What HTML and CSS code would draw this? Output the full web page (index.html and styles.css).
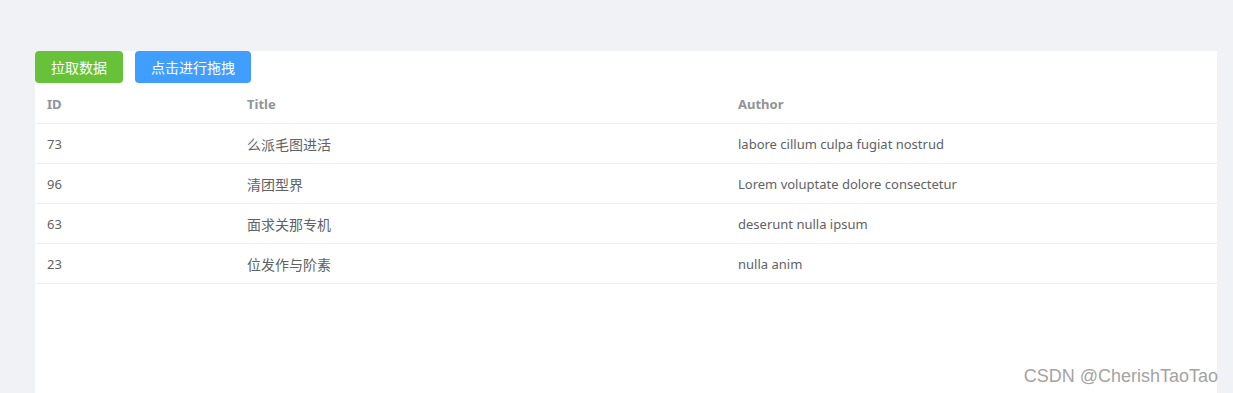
FILE: index.html
```html
<!DOCTYPE html>
<html lang="zh">
<head>
<meta charset="utf-8">
<link rel="stylesheet" href="styles.css">
</head>
<body>
<div class="page">
  <div class="panel">
    <div class="toolbar">
      <button class="btn btn-success">拉取数据</button>
      <button class="btn btn-primary">点击进行拖拽</button>
    </div>
    <div class="table">
      <div class="row head">
        <div class="cell c-id">ID</div>
        <div class="cell c-title">Title</div>
        <div class="cell c-author">Author</div>
      </div>
      <div class="row">
        <div class="cell c-id">73</div>
        <div class="cell c-title zh">么派毛图进活</div>
        <div class="cell c-author">labore cillum culpa fugiat nostrud</div>
      </div>
      <div class="row">
        <div class="cell c-id">96</div>
        <div class="cell c-title zh">清团型界</div>
        <div class="cell c-author">Lorem voluptate dolore consectetur</div>
      </div>
      <div class="row">
        <div class="cell c-id">63</div>
        <div class="cell c-title zh">面求关那专机</div>
        <div class="cell c-author">deserunt nulla ipsum</div>
      </div>
      <div class="row">
        <div class="cell c-id">23</div>
        <div class="cell c-title zh">位发作与阶素</div>
        <div class="cell c-author">nulla anim</div>
      </div>
    </div>
  </div>
</div>
<div class="watermark">CSDN @CherishTaoTao</div>
</body>
</html>
```
FILE: styles.css
```css
html, body {
  margin: 0;
  padding: 0;
  background: #f0f2f5;
  height: 100%;
  overflow: hidden;
}
body {
  font-family: "Noto Sans", "Noto Sans CJK SC", sans-serif;
  font-size: 13px;
  color: #606266;
}
.page {
  padding: 51px 16px 0 35px;
  height: 100%;
  box-sizing: border-box;
}
.panel {
  background: #fff;
  height: 100%;
}
.toolbar {
  display: flex;
  gap: 12px;
  margin-bottom: 1px;
}
.btn {
  height: 32px;
  padding: 0 16px;
  border: none;
  border-radius: 4px;
  color: #fff;
  font-family: "Noto Sans CJK SC", sans-serif;
  font-size: 14px;
  line-height: 32px;
  cursor: pointer;
}
.btn-success { background: #67c23a; }
.btn-primary { background: #409eff; }
.row {
  display: flex;
  height: 40px;
  box-sizing: border-box;
  align-items: center;
  border-bottom: 1px solid #ebeef5;
}
.cell {
  padding: 0 12px;
  box-sizing: border-box;
  white-space: nowrap;
}
.c-id { width: 200px; }
.c-title { width: 491px; }
.c-author { flex: 1; }
.zh { font-size: 14px; }
.head .cell {
  color: #909399;
  font-weight: bold;
  font-size: 13px;
}
.watermark {
  position: absolute;
  right: 15px;
  top: 366px;
  font-family: "Liberation Sans", Arial, sans-serif;
  font-size: 18px;
  color: #a3a3a3;
}
```
